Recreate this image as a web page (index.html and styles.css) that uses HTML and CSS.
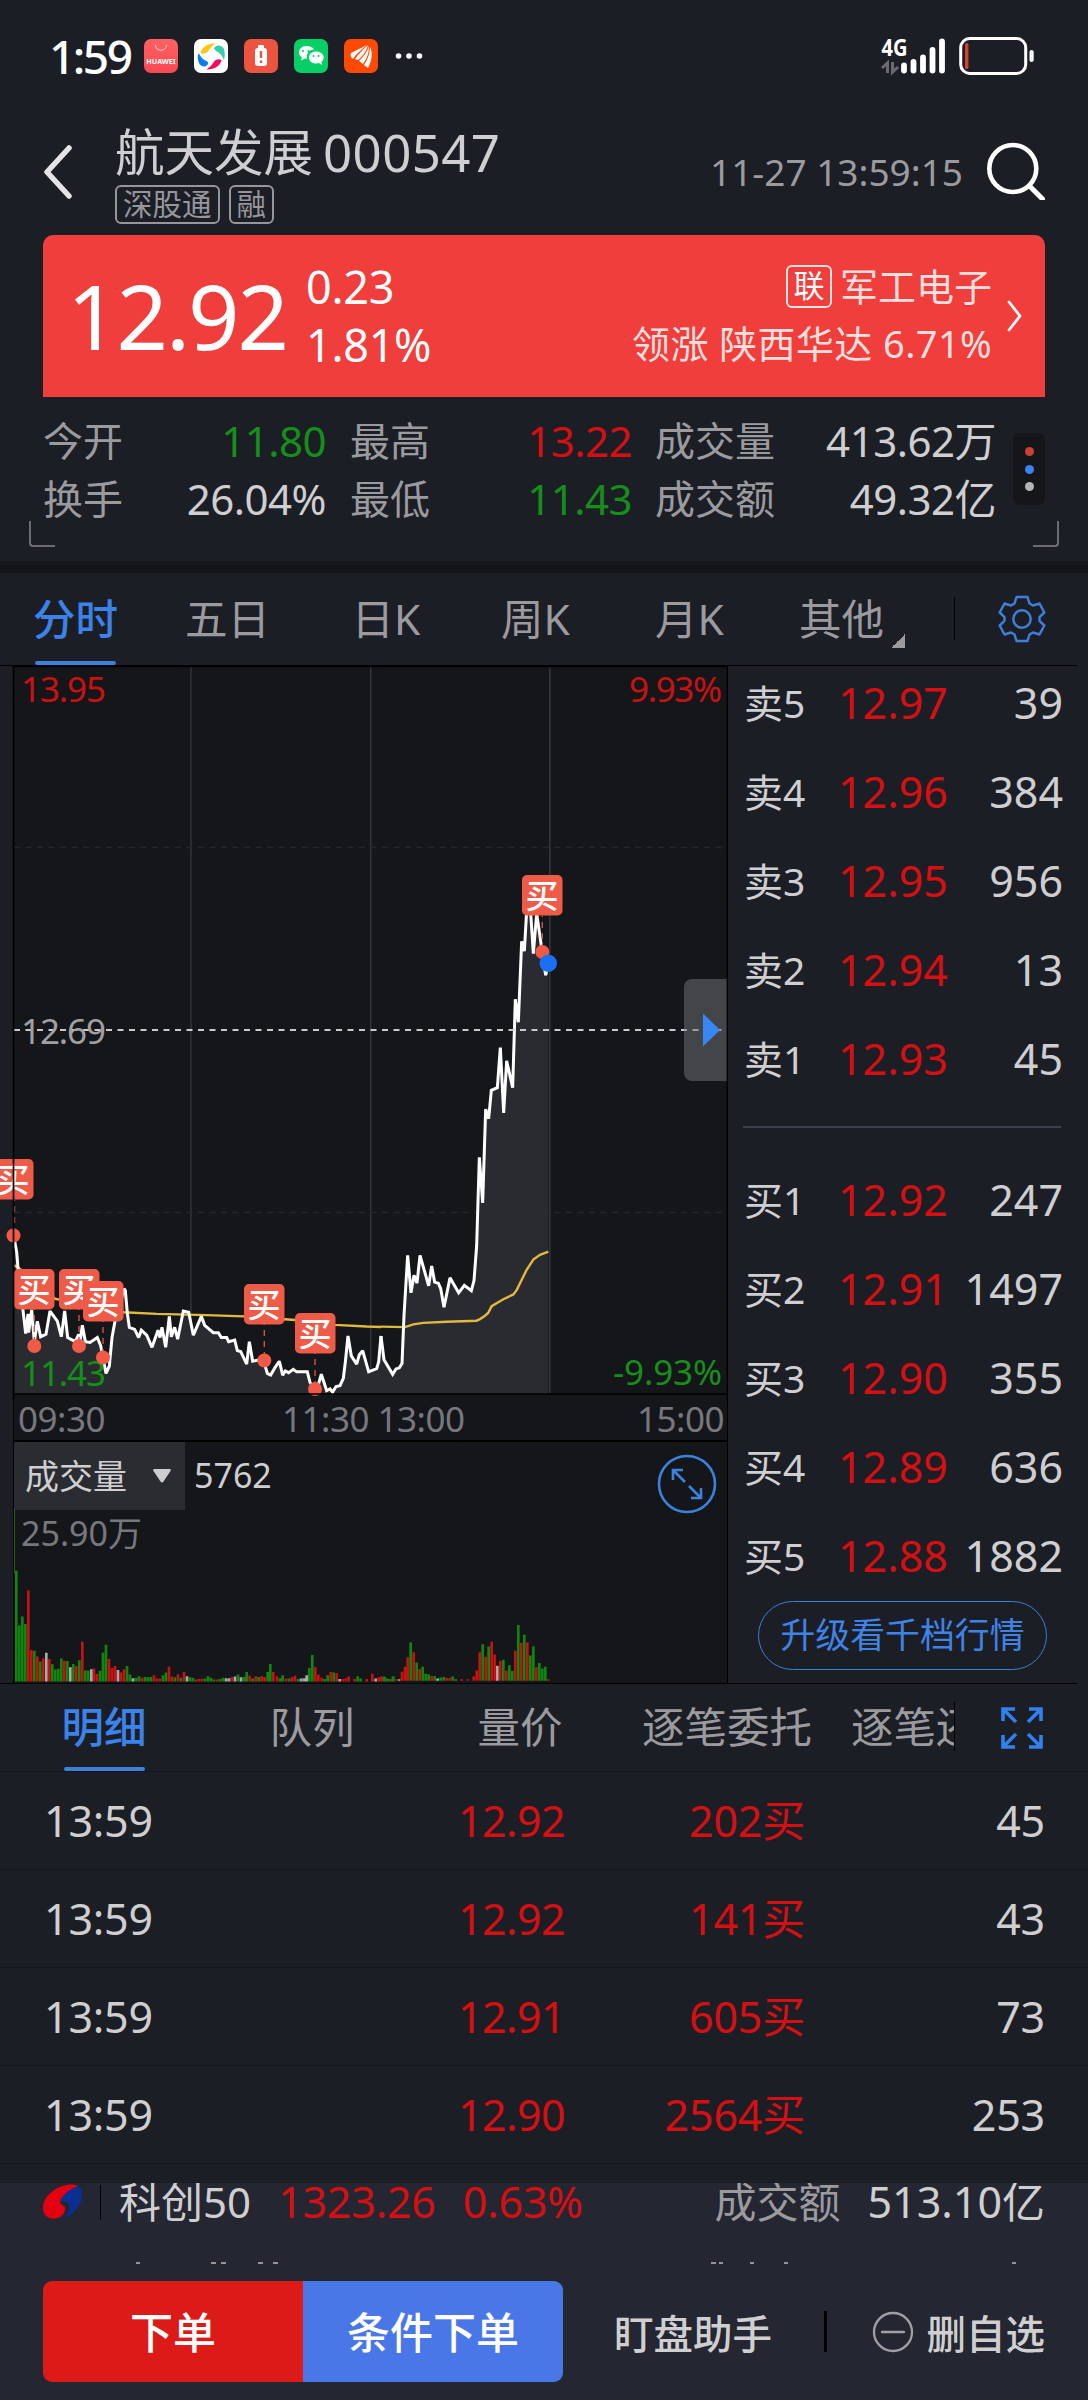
FILE: index.html
```html
<!DOCTYPE html>
<html lang="zh-CN">
<head>
<meta charset="utf-8">
<title>航天发展 000547</title>
<link rel="stylesheet" href="styles.css">
</head>
<body>
<div class="status">
  <span class="clock">1:59</span>
  <svg class="apps" width="284" height="36" viewBox="143 38 284 36">
    <defs><linearGradient id="hw" x1="0" y1="0" x2="0" y2="1"><stop offset="0" stop-color="#ff6264"/><stop offset="1" stop-color="#fa4852"/></linearGradient></defs>
    <rect x="144" y="39" width="34" height="34" rx="7" fill="url(#hw)"/>
    <path d="M155.500 45c0 7 11 7 11 0" fill="none" stroke="#ffd0d0" stroke-width="1"/>
    <text x="161" y="63.500" font-size="7.200" font-weight="700" fill="#fff" text-anchor="middle">HUAWEI</text>
    <rect x="194" y="39" width="34" height="34" rx="7" fill="#fff"/>
    <path d="M200.500 53c1-6 8-10 15-9.500-3 2-6 5-7.500 8-2 2-5 3-7.500 1.500z" fill="#fdc513"/>
    <path d="M214 48c3-4 8-3 10 1 1 4 1 8 0 11-2-5-5-8-8-9-1-1-2-2-2-3z" fill="#35cfa9"/>
    <path d="M221.500 60c-1 6-8 10-15 9.500 3-2 6-5 7.500-8 2-2 5-3 7.500-1.500z" fill="#ee0c5d"/>
    <path d="M208 64c-3 4-7 3-9-1-1.500-4-1.500-7-.5-10 2 4 5 7 8 8 1 .5 2 2 1.500 3z" fill="#0a7bf2"/>
    <rect x="244" y="39" width="34" height="34" rx="7" fill="#ec5440"/>
    <rect x="255" y="48" width="12" height="18" rx="3" fill="#fff"/><rect x="258" y="45" width="6" height="4" rx="1" fill="#fff"/>
    <path d="M261 51v7M261 60.500v2.500" stroke="#ec5440" stroke-width="2.400"/>
    <rect x="294" y="39" width="34" height="34" rx="7" fill="#06cf65"/>
    <path d="M306 46c-4 0-7 3-7 6.500 0 2 1 4 3 5l-1 3 4-2h2c-1-6 3-9 7-9-1-2-4-3.500-8-3.500z" fill="#fff"/>
    <path d="M316 51.500c-4 0-7 2.500-7 6s3 6 7 6l3-.5 3 2-.6-3c1.500-1 2.300-3 2.300-4.500 0-3.500-3.700-6-7.700-6z" fill="#fff"/>
    <circle cx="303" cy="51" r="1" fill="#06cf65"/><circle cx="308.500" cy="51" r="1" fill="#06cf65"/><circle cx="313.500" cy="56" r="1" fill="#06cf65"/><circle cx="318.500" cy="56" r="1" fill="#06cf65"/>
    <rect x="344" y="39" width="34" height="34" rx="7" fill="#ff4a05"/>
    <path d="M351 53l16-8c-7 6-11 9-14 14-2-1-3-4-2-6zM368 45c-2 7-6 12-10 15l-3-1c3-5 8-9 13-14zM369 46c0 7-2 12-6 18l-4-3c5-5 8-9 10-15zM370 47c3 6 2 13-2 21l-4-3c4-6 6-12 6-18z" fill="#fff"/>
    <circle cx="398.500" cy="56" r="2.800" fill="#fff"/><circle cx="409" cy="56" r="2.800" fill="#fff"/><circle cx="419.500" cy="56" r="2.800" fill="#fff"/>
  </svg>
  <svg class="signal" width="160" height="58" viewBox="876 27 160 58">
    <text x="881.500" y="55.500" font-size="22.500" font-weight="700" fill="#fff" textLength="26" lengthAdjust="spacingAndGlyphs">4G</text>
    <path d="M887.500 73V63l-5.500 5M892.500 62v10l5.500-5" fill="none" stroke="#6a6b70" stroke-width="3"/>
    <path d="M904 65.500v5M913.500 62v8.500M923 57.500v13M932.500 50v20.500M942 41.500v29" stroke="#fff" stroke-width="5.800" stroke-linecap="round"/>
    <rect x="960.700" y="38.600" width="65" height="34.800" rx="9" fill="none" stroke="#fff" stroke-width="3"/>
    <rect x="965" y="43" width="3.400" height="26" rx="1.500" fill="#d6402f"/>
    <rect x="1029.500" y="50" width="4.200" height="12" rx="2" fill="#fff"/>
  </svg>
</div>

<header class="head">
  <svg class="back" width="30" height="54" viewBox="0 0 30 54"><path d="M26 3L4 27l22 24" fill="none" stroke="#e4e4e6" stroke-width="5.500" stroke-linecap="round" stroke-linejoin="round"/></svg>
  <div class="title">
    <h1>航天发展<span>000547</span></h1>
    <div class="tags"><span>深股通</span><span>融</span></div>
  </div>
  <time>11-27 13:59:15</time>
  <svg class="search" width="60" height="60" viewBox="985 140 60 60"><circle cx="1012.800" cy="168.500" r="23.500" fill="none" stroke="#fff" stroke-width="4.600"/><path d="M1029.500 186l13 13" stroke="#fff" stroke-width="5" stroke-linecap="round"/></svg>
</header>

<section class="quote">
  <strong>12.92</strong>
  <div class="delta"><span>0.23</span><span>1.81%</span></div>
  <div class="sector"><div><i>联</i>军工电子</div><div class="leader">领涨 陕西华达 6.71%</div></div>
  <svg width="16" height="32" viewBox="0 0 16 32"><path d="M2 2l11 14L2 30" fill="none" stroke="#fff" stroke-width="2.800" stroke-linecap="round" stroke-linejoin="round"/></svg>
</section>

<section class="stats">
  <dl>
    <dt>今开</dt><dd class="down">11.80</dd><dt>最高</dt><dd class="up">13.22</dd><dt>成交量</dt><dd>413.62万</dd>
    <dt>换手</dt><dd>26.04%</dd><dt>最低</dt><dd class="down">11.43</dd><dt>成交额</dt><dd>49.32亿</dd>
  </dl>
  <div class="dots"><b></b><b></b><b></b></div>
  <span class="corner corner-left"></span><span class="corner corner-right"></span>
</section>

<nav class="periods">
  <a class="active">分时</a><a>五日</a><a>日K</a><a>周K</a><a>月K</a><a class="more">其他</a>
  <svg class="gear" width="48" height="48" viewBox="-24 -24 48 48" fill="none" stroke="#3d7fd9" stroke-width="2.500" stroke-linejoin="round">
    <path d="M-5.500-22H5.500L7.500-15.500 11-13.500 17.500-15.500 22.300-6.500 17.500-1.800V1.800L22.300 6.500 17.500 15.500 11 13.500 7.500 15.500 5.500 22H-5.500L-7.500 15.500-11 13.500-17.500 15.500-22.300 6.500-17.500 1.800V-1.800L-22.300-6.500-17.500-15.500-11-13.500-7.500-15.500Z"/><circle r="8.700"/>
  </svg>
</nav>

<main class="market">
  <div class="charts">
    <svg class="price" width="728" height="734" viewBox="0 666 728 734">
      <rect x="14" y="666" width="714" height="734" fill="#15161a"/>
      <path d="M191 667V1394M370.700 667V1394" stroke="#34353d" stroke-width="1.400"/>
      <path d="M14 847.500H727M14 1212.500H727" stroke="#25262b" stroke-width="1.300" stroke-dasharray="6 5.500"/>
      <g transform="translate(0 1060) scale(.33333 .40816)">
        <path fill="#2a2b30" d="M43 440L50 470 54 510 62 560 70 620 77 670 84 622 86 668 95 612 103 690 112 640 122 678 138 672 150 615 172 640 184 678 194 615 203 680 226 690 236 672 240 690 247 650 256 690 270 692 292 680 302 700 318 768 328 750 336 680 345 640 360 600 372 560 376 565 382 620 388 655 404 660 416 680 424 662 440 674 456 704 474 662 480 680 486 655 497 704 508 628 514 678 524 655 533 684 550 615 566 618 580 674 604 628 614 650 640 668 655 668 664 680 680 680 686 690 704 686 712 712 722 714 740 745 748 690 758 738 775 735 792 740 802 768 812 772 824 755 838 738 848 772 856 762 866 766 880 758 890 764 922 764 930 790 945 806 955 795 964 770 980 810 990 806 998 814 1008 800 1020 798 1030 780 1036 740 1044 676 1054 725 1070 745 1078 722 1088 712 1106 764 1130 756 1136 740 1143 676V818H43Z"/>
        <path class="avg" d="M43 503L60 512 165 585 178 587 300 605 370 618 470 622 620 625 732 628 855 635 885 637 1005 649 1100 653 1143 654"/>
        <path class="line" d="M43 440L50 470 54 510 62 560 70 620 77 670 84 622 86 668 95 612 103 690 112 640 122 678 138 672 150 615 172 640 184 678 194 615 203 680 226 690 236 672 240 690 247 650 256 690 270 692 292 680 302 700 318 768 328 750 336 680 345 640 360 600 372 560 376 565 382 620 388 655 404 660 416 680 424 662 440 674 456 704 474 662 480 680 486 655 497 704 508 628 514 678 524 655 533 684 550 615 566 618 580 674 604 628 614 650 640 668 655 668 664 680 680 680 686 690 704 686 712 712 722 714 740 745 748 690 758 738 775 735 792 740 802 768 812 772 824 755 838 738 848 772 856 762 866 766 880 758 890 764 922 764 930 790 945 806 955 795 964 770 980 810 990 806 998 814 1008 800 1020 798 1030 780 1036 740 1044 676 1054 725 1070 745 1078 722 1088 712 1106 764 1130 756 1136 740 1143 676"/>
      </g>
      <g transform="translate(380 860) scale(.33333 .53568)">
        <path fill="#2a2b30" d="M3 889L12 933 38 960 48 950 58 948 66 940 72 850 83 738 93 808 102 775 111 790 120 738 146 795 155 758 164 788 175 790 182 800 192 835 210 780 236 808 253 794 274 804 282 785 290 720 298 555 308 640 317 465 326 483 334 430 352 425 361 350 371 472 380 375 398 425 406 260 415 303 425 152 433 170 440 95 448 60 460 175 470 100 484 160 497 215 505 193V997H3Z"/>
        <path class="avg" d="M3 871L75 872 100 867 130 864 200 862 290 860 300 857 315 851 325 845 335 833 370 820 400 811 410 803 440 765 460 746 480 737 505 731"/>
        <path class="line" d="M3 889L12 933 38 960 48 950 58 948 66 940 72 850 83 738 93 808 102 775 111 790 120 738 146 795 155 758 164 788 175 790 182 800 192 835 210 780 236 808 253 794 274 804 282 785 290 720 298 555 308 640 317 465 326 483 334 430 352 425 361 350 371 472 380 375 398 425 406 260 415 303 425 152 433 170 440 95 448 60 460 175 470 100 484 160 497 215 505 193"/>
      </g>
      <path d="M549.800 667V1394" stroke="#34353d" stroke-width="1.600"/>
      <path d="M14 1030H727" stroke="#c9c9cb" stroke-width="1.800" stroke-dasharray="6 5.500"/>
      <g font-size="35">
        <text class="t-up" x="21" y="702" textLength="85">13.95</text>
        <text class="t-up" x="629" y="702" textLength="93">9.93%</text>
        <text fill="#a0a0a3" x="21" y="1044" textLength="85">12.69</text>
        <text class="t-down" x="21" y="1385.500" textLength="85">11.43</text>
        <text class="t-down" x="613" y="1385" textLength="109">-9.93%</text>
      </g>
      <path d="M14.500 1200v30M34.300 1309v32M79 1309v32M103 1321v32M264.300 1324v32M315 1353v32M542.300 916v31" stroke="#d9503f" stroke-width="1.400" stroke-dasharray="6 5" stroke-dashoffset="-6"/>
      <g fill="#f05a46"><circle cx="13.500" cy="1235.500" r="7"/><circle cx="34.300" cy="1346" r="7"/><circle cx="79" cy="1346" r="7"/><circle cx="103" cy="1357.500" r="7"/><circle cx="264.300" cy="1360.500" r="7"/><circle cx="315" cy="1389" r="7"/><circle cx="542.300" cy="952" r="7"/></g>
      <circle cx="548.300" cy="963.200" r="8.700" fill="#1a6ff5"/>
      <g class="buy" transform="translate(-7 1159)"><rect width="40.500" height="40.500" rx="5"/><text x="3.500" y="33">买</text></g>
      <g class="buy" transform="translate(14 1269)"><rect width="40.500" height="40.500" rx="5"/><text x="3.500" y="33">买</text></g>
      <g class="buy" transform="translate(59 1269)"><rect width="40.500" height="40.500" rx="5"/><text x="3.500" y="33">买</text></g>
      <g class="buy" transform="translate(83 1281)"><rect width="40.500" height="40.500" rx="5"/><text x="3.500" y="33">买</text></g>
      <g class="buy" transform="translate(244 1284)"><rect width="40.500" height="40.500" rx="5"/><text x="3.500" y="33">买</text></g>
      <g class="buy" transform="translate(295 1313)"><rect width="40.500" height="40.500" rx="5"/><text x="3.500" y="33">买</text></g>
      <g class="buy" transform="translate(522 875)"><rect width="40.500" height="40.500" rx="5"/><text x="3.500" y="33">买</text></g>
      <path d="M728 979H692a8 8 0 0 0-8 8v86a8 8 0 0 0 8 8h36z" fill="#737376" fill-opacity=".5"/>
      <path d="M703 1013.500L720 1030l-17 16.500z" fill="#3787f5"/>
      <path d="M13.500 1400V666.500H727.500V1400M13 1394H728" fill="none" stroke="#000" stroke-width="1.700"/>
    </svg>
    <div class="axis"><span>09:30</span><span>11:30 13:00</span><span>15:00</span></div>
    <div class="volume">
      <div class="volume-head">
        <div class="picker">成交量<svg width="20" height="16" viewBox="0 0 20 16"><path d="M2.500 1h15q2 0 1 2l-7 10.500q-1.500 2-3 0L1.500 3q-1-2 1-2z" fill="#cdcdcf"/></svg></div>
        <span>5762</span>
        <svg class="expand" width="60" height="60" viewBox="-30 -30 60 60" fill="none" stroke="#3b82de" stroke-width="2.600"><circle r="28"/><path d="M-2-2L-14-14M-14-4V-14H-4M2 2L14 14M14 4V14H4"/></svg>
      </div>
      <div class="volume-max">25.90万</div>
      <svg class="bars" width="713" height="240" viewBox="14 1443 713 240" fill="none" stroke-width="8">
        <g transform="translate(0 1060) scale(.33333 .40816)">
          <path d="M43.500 1102V1260" stroke="#147a18" stroke-width="2.500"/>
          <path stroke="#10860f" d="M49 1525V1254M58 1525V1388M67 1525V1366M76 1525V1384M103 1525V1450M121 1525V1476M157 1525V1483M166 1525V1496M175 1525V1494M184 1525V1469M202 1525V1475M220 1525V1482M238 1525V1473M256 1525V1498M265 1525V1498M300 1525V1499M309 1525V1455M318 1525V1435M381 1525V1487M390 1525V1508M408 1525V1516M417 1525V1512M435 1525V1514M444 1525V1515M453 1525V1514M489 1525V1510M498 1525V1503M525 1525V1515M543 1525V1516M570 1525V1515M579 1525V1516M615 1525V1518M624 1525V1512M633 1525V1516M642 1525V1520M660 1525V1519M669 1525V1516M714 1525V1508M732 1525V1514M740 1525V1502M758 1525V1518M776 1525V1514M803 1525V1502M811 1525V1482M840 1525V1517M848 1525V1510M867 1525V1518M894 1525V1519M928 1525V1492M937 1525V1460M974 1525V1519M983 1525V1510M1001 1525V1503M1073 1525V1512M1082 1525V1518M1154 1525V1514M1163 1525V1519M1180 1525V1513"/>
          <path stroke="#c51212" d="M85 1525V1302M94 1525V1448M112 1525V1464M130 1525V1468M148 1525V1470M193 1525V1474M229 1525V1487M247 1525V1428M282 1525V1493M291 1525V1507M327 1525V1470M336 1525V1492M345 1525V1487M363 1525V1503M372 1525V1495M426 1525V1516M462 1525V1510M471 1525V1518M480 1525V1518M507 1525V1489M516 1525V1513M534 1525V1508M552 1525V1502M588 1525V1520M597 1525V1519M606 1525V1519M651 1525V1520M696 1525V1514M749 1525V1511M767 1525V1512M785 1525V1512M794 1525V1514M820 1525V1502M831 1525V1512M858 1525V1518M876 1525V1514M885 1525V1511M946 1525V1490M955 1525V1508M965 1525V1516M992 1525V1502M1010 1525V1505M1028 1525V1519M1037 1525V1518M1046 1525V1513M1064 1525V1519M1100 1525V1519M1117 1525V1506M1136 1525V1515M1145 1525V1513M1172 1525V1519"/>
          <path stroke="#a9a9ab" d="M139 1525V1455M211 1525V1490M274 1525V1495M354 1525V1497M399 1525V1517M561 1525V1512M678 1525V1517M687 1525V1517M705 1525V1513M723 1525V1515M903 1525V1518M912 1525V1517M920 1525V1510M1019 1525V1519M1127 1525V1518"/>
        </g>
        <g transform="translate(380 860) scale(.33333 .53568)">
          <path stroke="#10860f" d="M12 1534V1526M21 1534V1530M30 1534V1531M39 1534V1526M92 1534V1462M110 1534V1500M128 1534V1508M137 1534V1521M146 1534V1522M164 1534V1525M182 1534V1528M191 1534V1527M218 1534V1526M227 1534V1531M308 1534V1466M326 1534V1470M370 1534V1495M388 1534V1505M397 1534V1516M415 1534V1430M433 1534V1448M451 1534V1487M460 1534V1470M478 1534V1501M487 1534V1511M496 1534V1508"/>
          <path stroke="#c51212" d="M3 1534V1527M48 1534V1531M66 1534V1517M75 1534V1508M83 1534V1490M101 1534V1481M119 1534V1512M155 1534V1525M200 1534V1529M209 1534V1529M245 1534V1531M263 1534V1531M281 1534V1526M290 1534V1515M299 1534V1481M317 1534V1489M335 1534V1461M344 1534V1485M361 1534V1497M379 1534V1515M406 1534V1478M424 1534V1463M442 1534V1462M469 1534V1509M505 1534V1531"/>
          <path stroke="#a9a9ab" d="M57 1534V1531M173 1534V1530M352 1534V1506"/>
        </g>
      </svg>
    </div>
  </div>
  <aside class="book">
    <div class="row"><span>卖5</span><b>12.97</b><em>39</em></div>
    <div class="row"><span>卖4</span><b>12.96</b><em>384</em></div>
    <div class="row"><span>卖3</span><b>12.95</b><em>956</em></div>
    <div class="row"><span>卖2</span><b>12.94</b><em>13</em></div>
    <div class="row"><span>卖1</span><b>12.93</b><em>45</em></div>
    <hr>
    <div class="row"><span>买1</span><b>12.92</b><em>247</em></div>
    <div class="row"><span>买2</span><b>12.91</b><em>1497</em></div>
    <div class="row"><span>买3</span><b>12.90</b><em>355</em></div>
    <div class="row"><span>买4</span><b>12.89</b><em>636</em></div>
    <div class="row"><span>买5</span><b>12.88</b><em>1882</em></div>
    <a class="upgrade">升级看千档行情</a>
  </aside>
</main>

<nav class="detail-tabs">
  <a class="active">明细</a><a>队列</a><a>量价</a><a>逐笔委托</a><a>逐笔还原</a>
  <svg width="42" height="42" viewBox="0 0 42 42" fill="none" stroke="#3381ee" stroke-width="3.600"><path d="M2 14V2H14M2.500 2.500L15 15M28 2H40V14M39.500 2.500L27 15M2 28V40H14M2.500 39.500L15 27M28 40H40V28M39.500 39.500L27 27"/></svg>
</nav>

<section class="ticks">
  <div><span>13:59</span><b>12.92</b><b>202买</b><span>45</span></div>
  <div><span>13:59</span><b>12.92</b><b>141买</b><span>43</span></div>
  <div><span>13:59</span><b>12.91</b><b>605买</b><span>73</span></div>
  <div><span>13:59</span><b>12.90</b><b>2564买</b><span>253</span></div>
</section>

<footer>
  <div class="index">
    <svg width="40" height="36" viewBox="43 2184 40 36"><path d="M78 2186c-12-6-37 7-35 24 2 12 20 11 22 0 2-6-8-5-4-9 5-8 14-9 17-15z" fill="#e40011"/><path d="M78 2186c8 6 5 24-15 33 8-9 9-16 2-17-3 0-6 0-4-3 5-8 12-11 17-13z" fill="#082f91"/></svg>
    <i></i><span class="index-name">科创50</span><b>1323.26</b><b>0.63%</b><span class="index-label">成交额</span><span>513.10亿</span>
  </div>
  <svg class="next" width="1088" height="2" viewBox="0 0 1088 2"><path d="M136 1h4M211 1h5M221 1h5M258 1h5M273 1h5M711 1h5M719 1h4M750 1h4M784 1h4M1012 1h4" stroke="#b8b8ba" stroke-width="1.500"/></svg>
  <div class="actions">
    <button class="order">下单</button><button class="cond">条件下单</button>
    <a class="helper">盯盘助手</a><i></i>
    <a class="remove"><svg width="42" height="42" viewBox="-21 -21 42 42" fill="none" stroke="#a0a0a4" stroke-width="2.300" stroke-linecap="round"><circle r="19"/><path d="M-11 0H11"/></svg>删自选</a>
  </div>
</footer>
</body>
</html>
```

FILE: styles.css
```css
* { box-sizing: border-box; margin: 0; padding: 0; }
body {
  width: 1088px; height: 2400px; overflow: hidden;
  background: #1c1e26; color: #cfcfd1;
  font-family: "Noto Sans", "Noto Sans CJK SC", sans-serif;
}
b, em, i, h1, strong { font-weight: 400; font-style: normal; }
svg { display: block; flex: none; }

.status { display: flex; align-items: center; height: 112px; padding: 0 52px 0 49px; }
.clock { width: 94px; color: #fff; font-size: 46px; font-weight: 500; letter-spacing: -2.500px; line-height: 60px; }
.signal { margin-left: auto; }

.head { display: flex; height: 123px; padding: 10px 43px 0 43px; }
.back { margin: 23px 0 0 0; }
.title { width: 440px; padding-left: 42px; }
h1 { display: flex; align-items: center; height: 60px; font-size: 49.500px; line-height: 60px; white-space: nowrap; }
h1 span { margin-left: 10px; font-size: 51px; letter-spacing: .4px; }
.tags { display: flex; gap: 9px; margin-top: 3px; }
.tags span { height: 39px; padding: 0 6px; border: 2px solid #96969b; border-radius: 6px; color: #96969b; font-size: 29.500px; line-height: 34px; }
time { margin-left: auto; margin-right: 22px; color: #9b9b9f; font-size: 37px; line-height: 99px; white-space: nowrap; }
.search { margin-top: 18px; }

.quote { display: flex; width: 1002px; height: 162px; margin-left: 43px; border-radius: 10px 10px 0 0; background: #ef3e3c; color: #fff; }
.quote strong { width: 263px; padding-left: 24px; font-size: 90px; line-height: 160px; letter-spacing: -2px; }
.delta { width: 150px; padding-top: 23px; }
.delta span { display: block; height: 58px; font-size: 45px; line-height: 58px; letter-spacing: -.3px; }
.sector { margin-left: auto; padding-top: 23px; color: #ffdedc; font-size: 38px; text-align: right; }
.sector div { display: flex; align-items: center; justify-content: flex-end; height: 57px; line-height: 57px; white-space: pre; }
.sector .leader { letter-spacing: .4px; }
.sector i { width: 46px; height: 43px; margin-right: 8px; border: 2px solid #ffe3e2; border-radius: 6px; color: #fff; font-size: 31px; line-height: 37px; text-align: center; }
.quote > svg { margin: 65px 22px 0 15px; }

.stats { position: relative; display: flex; height: 176px; padding: 15px 43px 0; border-bottom: 12px solid #15161a; }
.stats dl { display: grid; grid-template-columns: 100px 183px 124px 182px 150px 214px; grid-auto-rows: 58px; width: 953px; }
.stats dt, .stats dd { font-size: 42px; line-height: 58px; white-space: nowrap; letter-spacing: -.5px; }
.stats dt { color: #9b9b9f; font-size: 40px; letter-spacing: 0; }
.stats dd { text-align: right; }
.stats dt:nth-of-type(3n+2) { padding-left: 24px; }
.stats dt:nth-of-type(3n) { padding-left: 23px; }
.up { color: #d50f12; }
.down { color: #168f1a; }
.dots { display: flex; flex-direction: column; align-items: center; justify-content: center; gap: 8.500px; width: 32px; height: 72px; margin: 21px 0 0 17px; border-radius: 6px; background: #15161a; }
.dots b { width: 9px; height: 9px; border-radius: 50%; background: #cc4232; }
.dots b:nth-child(2) { background: #3b83ee; }
.dots b:nth-child(3) { background: #b4b4b6; }
.corner { position: absolute; top: 124px; width: 26px; height: 26px; border-bottom: 2.500px solid #6c6d74; }
.corner-left { left: 29px; border-left: 2.500px solid #6c6d74; border-radius: 0 0 0 4px; }
.corner-right { right: 29px; border-right: 2.500px solid #6c6d74; border-radius: 0 0 4px 0; }

.periods { display: grid; grid-template-columns: 151px 153px 164px 135px 173px 179px 1fr; width: 1077px; height: 93px; border-bottom: 1px solid #000; }
.periods a { display: flex; justify-content: center; color: #9b9b9f; font-size: 42.500px; line-height: 92px; white-space: nowrap; }
.active { position: relative; }
.periods a.active, .detail-tabs a.active { color: #3b82ea; font-weight: 500; }
.active::after { position: absolute; bottom: 0; width: 81px; height: 4px; border-radius: 2px; background: #3d7fd9; content: ""; }
.periods .more { position: relative; justify-content: flex-start; padding-left: 23px; }
.more::before { position: absolute; top: 61px; left: 115px; width: 14px; height: 14px; background: linear-gradient(135deg, transparent 50%, #9b9b9f 50%); content: ""; }
.more::after { position: absolute; top: 24px; right: 0; width: 1px; height: 43px; background: #000; content: ""; }
.gear { margin: 22px 0 0 43px; }

.market { display: flex; height: 1018px; width: 1077px; border-bottom: 1px solid #000; }
.charts { width: 728px; }
.avg, .line { fill: none; vector-effect: non-scaling-stroke; }
.avg { stroke: #e2b83e; stroke-width: 2.400; }
.line { stroke: #fff; stroke-width: 3; stroke-linejoin: miter; stroke-miterlimit: 2; }
.t-up { fill: #c91114; }
.t-down { fill: #168f1a; }
.buy rect { fill: #ee5b48; }
.buy text { fill: #fff; font-size: 33px; font-family: "Noto Sans CJK SC", sans-serif; font-weight: 500; }
.axis { display: grid; grid-template-columns: 264px 1fr 94px; width: 715px; height: 42px; margin-left: 13px; padding-left: 4px; border: solid #000; border-width: 0 1px 2px; background: #15161a; color: #77787d; font-size: 35px; line-height: 37px; letter-spacing: -.5px; white-space: nowrap; }
.axis span:last-child { text-align: right; padding-right: 3px; }
.volume { display: grid; width: 715px; height: 241px; margin-left: 13px; border: solid #000; border-width: 0 1px; background: #15161a; }
.volume > * { grid-area: 1 / 1; }
.volume-head { display: flex; height: 68px; font-size: 35px; line-height: 67px; }
.picker { display: flex; align-items: center; gap: 25px; width: 171px; padding-left: 11px; background: #2b2c31; font-size: 34px; }
.volume-head > span { padding-left: 9px; font-size: 34px; }
.expand { margin: 12px 10px 0 auto; }
.volume-max { padding: 68px 0 0 7px; color: #77787d; font-size: 34px; line-height: 46px; }

.book { width: 349px; padding: 0 16px 0 15px; }
.row { display: grid; grid-template-columns: 95px 119px 1fr; height: 89px; font-size: 43px; line-height: 73px; white-space: nowrap; }
.row span { padding-left: 1px; font-size: 39px; line-height: 74px; }
.row b { color: #d50f12; }
.row em { text-align: right; margin-right: -2px; }
.book hr { height: 2px; margin: 15px 0 35px; border: 0; background: #3d3f4b; }
.upgrade { display: block; width: 289px; height: 69px; margin: -7px 0 0 15px; border: 1.500px solid #3b7fd8; border-radius: 35px; color: #3f83e6; font-size: 34.900px; line-height: 65px; text-align: center; }

.detail-tabs { position: relative; display: grid; grid-template-columns: 208px 208px 208px 208px 123px 1fr; height: 88px; border-bottom: 1px solid #14161c; }
.detail-tabs a { display: flex; justify-content: center; overflow: hidden; color: #9b9b9f; font-size: 42.500px; line-height: 86px; white-space: nowrap; }
.detail-tabs a:nth-child(4) { justify-content: flex-start; padding-left: 18px; }
.detail-tabs a:nth-child(5) { justify-content: flex-start; margin: 18px 0 20px; padding-left: 19px; border-right: 1px solid #000; line-height: 50px; }
.detail-tabs svg { margin: 23px 0 0 46px; }

.ticks div { display: grid; grid-template-columns: 300px 221px 240px 1fr; height: 98px; padding: 0 43px 0 44px; border-bottom: 1px solid #14161c; font-size: 43px; letter-spacing: -.2px; line-height: 97px; text-align: right; }
.ticks span:first-child { text-align: left; }
.ticks b { color: #d50f12; }
.ticks b:nth-child(2) { letter-spacing: -.6px; }

footer { height: 217px; margin-top: 19px; background: #242632; overflow: hidden; }
.index { display: flex; align-items: center; height: 50px; padding: 0 43px 12px; font-size: 43px; line-height: 38px; white-space: nowrap; }
.index i { width: 1px; height: 35px; margin: 0 18px 0 17px; background: #000; }
.index-name { font-size: 42px; line-height: 36px; }
.index b { margin-left: 27px; color: #d50f12; letter-spacing: -.2px; }
.index-label { margin-left: auto; margin-right: 27px; color: #9b9b9f; font-size: 42px; }
.next { margin-top: 29px; }
.actions { display: flex; align-items: center; height: 101px; margin: 17px 43px 0; font-size: 39.500px; font-weight: 500; white-space: nowrap; }
.actions button { width: 260px; height: 101px; padding-bottom: 3px; border: 0; border-radius: 9px 0 0 9px; background: #dc1b19; color: #fff; font: inherit; font-size: 43px; }
.actions .cond { border-radius: 0 9px 9px 0; background: #4a77e8; }
.helper { width: 261px; padding-left: 51px; }
.actions i { width: 3px; height: 41px; background: #000; }
.remove { display: flex; align-items: center; gap: 13px; margin-left: auto; }
```
